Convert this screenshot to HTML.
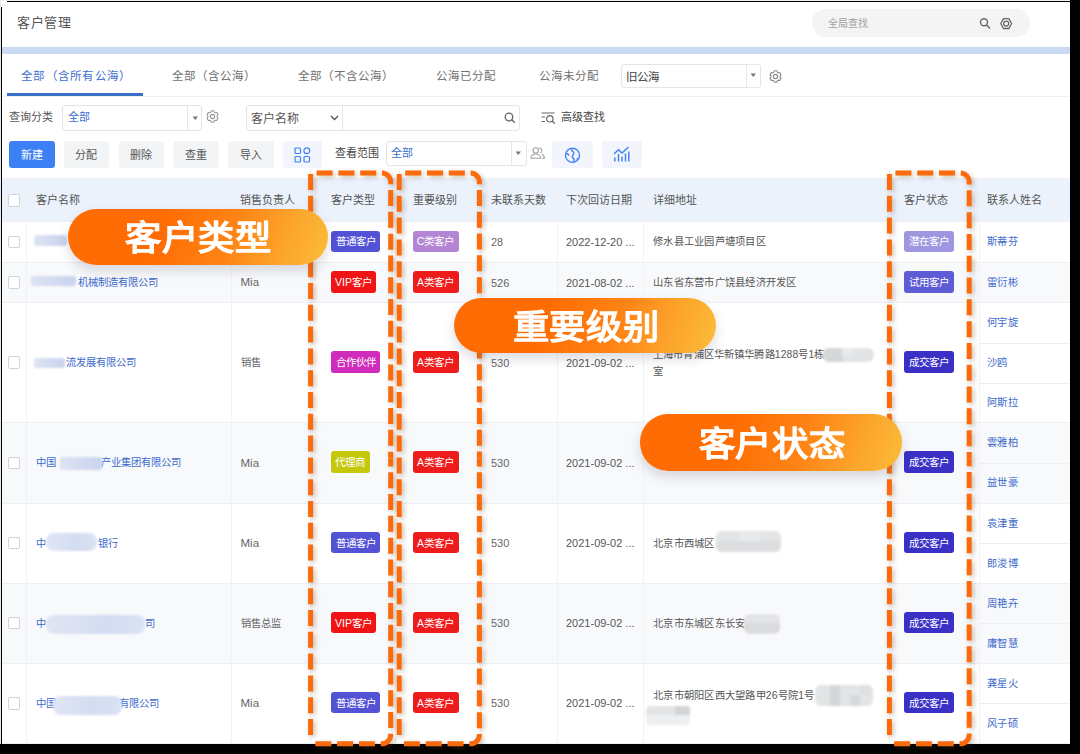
<!DOCTYPE html>
<html lang="zh-CN">
<head>
<meta charset="utf-8">
<style>
*{box-sizing:border-box;margin:0;padding:0}
html,body{width:1080px;height:754px;overflow:hidden;background:#fff}
body{position:relative;font-family:"Liberation Sans",sans-serif;color:#555;font-size:11px}
.a{position:absolute;white-space:nowrap;line-height:1}
.blk{position:absolute;background:#000}
.btn{position:absolute;top:141px;height:26.5px;background:#f2f3f5;border-radius:3px}
.sel{position:absolute;border:1px solid #e2e5ea;border-radius:3px;background:#fff}
.row{position:absolute;left:2px;width:1068px}
.ev{background:#f8f9fb}
.vd{position:absolute;width:1px;background:#f1f2f5}
.hl{position:absolute;left:2px;width:1068px;height:1px;background:#edeff3}
.cb{position:absolute;left:7.5px;width:12.5px;height:12.5px;border:1px solid #cfd3da;border-radius:2px;background:#fff}
.bd{position:absolute;height:21.5px;border-radius:3px;color:#fff;font-size:10.5px;line-height:21.5px;text-align:center}
.pill{position:absolute;border-radius:28px;background:linear-gradient(108deg,#ff6c04 0%,#ff6c02 35%,#fe8416 62%,#fca42c 82%,#fbbd3a 100%);box-shadow:0 6px 12px rgba(60,60,90,.18)}
</style>
</head>
<body>

<div class="pill" style="z-index:9;left:67.5px;top:209px;width:260.3px;height:56.0px"></div>
<div class="a" style="z-index:10;left:68.1px;width:260.3px;top:221.22px;text-align:center;font-size:34px;letter-spacing:0.3px;transform:scaleX(1.065);-webkit-text-stroke:1.5px #fff;color:#fff">客户类型</div>
<div class="pill" style="z-index:9;left:454.4px;top:297.8px;width:262.0px;height:55.5px"></div>
<div class="a" style="z-index:10;left:455.0px;width:262.0px;top:309.77px;text-align:center;font-size:34px;letter-spacing:0.3px;transform:scaleX(1.065);-webkit-text-stroke:1.5px #fff;color:#fff">重要级别</div>
<div class="pill" style="z-index:9;left:640px;top:414.4px;width:262.0px;height:56.4px"></div>
<div class="a" style="z-index:10;left:640.6px;width:262.0px;top:426.82px;text-align:center;font-size:34px;letter-spacing:0.3px;transform:scaleX(1.065);-webkit-text-stroke:1.5px #fff;color:#fff">客户状态</div>
<div class="a" style="left:0;top:0;width:1080px;height:1px;background:#f0f0f0"></div>
<div class="a" style="left:0;top:0;width:1px;height:754px;background:#e8eaea"></div>
<div class="a" style="left:17px;top:16.09px;font-size:13px;color:#555;letter-spacing:0.6px;">客户管理</div>
<div class="a" style="left:812px;top:9px;width:218px;height:28px;border-radius:14px;background:#f4f4f4"></div>
<div class="a" style="left:828px;top:19.30px;font-size:10px;color:#a0a0a0;">全局查找</div>
<svg class="a" style="left:979px;top:17px" width="13" height="13" viewBox="0 0 13 13"><circle cx="5" cy="5.3" r="3.5" fill="none" stroke="#666" stroke-width="1.4"/><path d="M7.6 8l3.3 3.4" stroke="#666" stroke-width="1.5"/></svg>
<svg class="a" style="left:0;top:0" width="1080" height="60"><path d="M1000.8000000000001 23.55L1003.5 18.6H1008.9000000000001L1011.6 23.55L1008.9000000000001 28.5H1003.5Z" fill="none" stroke="#666" stroke-width="1.3" stroke-linejoin="round"/><circle cx="1006.2" cy="23.55" r="2.5" fill="none" stroke="#666" stroke-width="1.3"/></svg>
<div class="a" style="left:2px;top:47px;width:1068px;height:6.5px;background:#cadaf2"></div>
<div class="a" style="left:21px;top:70.59px;font-size:11.5px;color:#3d6fd0;letter-spacing:1.25px;">全部（含所有公海）</div>
<div class="a" style="left:171.5px;top:70.59px;font-size:11.5px;color:#707070;letter-spacing:1.1px;">全部（含公海）</div>
<div class="a" style="left:298px;top:70.59px;font-size:11.5px;color:#707070;letter-spacing:1.05px;">全部（不含公海）</div>
<div class="a" style="left:436.3px;top:70.59px;font-size:11.5px;color:#707070;letter-spacing:1.05px;">公海已分配</div>
<div class="a" style="left:539.3px;top:70.59px;font-size:11.5px;color:#707070;letter-spacing:1.0px;">公海未分配</div>
<div class="sel" style="left:620.5px;top:63.5px;width:140px;height:24.5px"></div>
<div class="a" style="left:745.5px;top:64.5px;width:1px;height:22.5px;background:#e4e6ea"></div>
<div class="a" style="left:625.5px;top:72.30px;font-size:11.5px;color:#444;">旧公海</div>
<svg class="a" style="left:750px;top:73px" width="7" height="5"><path d="M0.5 0.5h5.5L3.25 4z" fill="#777"/></svg>
<svg class="a" style="left:769px;top:70px" width="13" height="13" viewBox="0 0 13 13"><path d="M4.61 2.26 L5.35 0.82 L7.65 0.82 L8.39 2.26 L9.22 2.74 L10.85 2.66 L12.00 4.66 L11.12 6.02 L11.12 6.98 L12.00 8.34 L10.85 10.34 L9.22 10.26 L8.39 10.74 L7.65 12.18 L5.35 12.18 L4.61 10.74 L3.78 10.26 L2.15 10.34 L1.00 8.34 L1.88 6.98 L1.88 6.02 L1.00 4.66 L2.15 2.66 L3.78 2.74Z" fill="none" stroke="#888" stroke-width="1.1" stroke-linejoin="round"/><circle cx="6.5" cy="6.5" r="2.09" fill="none" stroke="#888" stroke-width="1.1"/></svg>
<div class="a" style="left:7px;top:93px;width:136px;height:3px;background:#3a6fc8"></div>
<div class="a" style="left:2px;top:96px;width:1068px;height:1px;background:#eef0f3"></div>
<div class="a" style="left:9px;top:112.33px;font-size:11px;color:#555;">查询分类</div>
<div class="sel" style="left:61.5px;top:105px;width:140px;height:25.5px"></div>
<div class="a" style="left:186.5px;top:106px;width:1px;height:23.5px;background:#e4e6ea"></div>
<div class="a" style="left:68px;top:112.33px;font-size:11px;color:#3d6fd0;">全部</div>
<svg class="a" style="left:191.5px;top:115.5px" width="7" height="5"><path d="M0.5 0.5h5.5L3.25 4z" fill="#777"/></svg>
<svg class="a" style="left:206px;top:110px" width="13" height="13" viewBox="0 0 13 13"><path d="M4.61 2.26 L5.35 0.82 L7.65 0.82 L8.39 2.26 L9.22 2.74 L10.85 2.66 L12.00 4.66 L11.12 6.02 L11.12 6.98 L12.00 8.34 L10.85 10.34 L9.22 10.26 L8.39 10.74 L7.65 12.18 L5.35 12.18 L4.61 10.74 L3.78 10.26 L2.15 10.34 L1.00 8.34 L1.88 6.98 L1.88 6.02 L1.00 4.66 L2.15 2.66 L3.78 2.74Z" fill="none" stroke="#999" stroke-width="1.1" stroke-linejoin="round"/><circle cx="6.5" cy="6.5" r="2.09" fill="none" stroke="#999" stroke-width="1.1"/></svg>
<div class="sel" style="left:246px;top:105px;width:274px;height:25.5px"></div>
<div class="a" style="left:342px;top:106px;width:1px;height:23.5px;background:#e4e6ea"></div>
<div class="a" style="left:251px;top:113.26px;font-size:12px;color:#555;">客户名称</div>
<svg class="a" style="left:329.5px;top:115px" width="9" height="6"><path d="M1 1l3.5 3.5L8 1" fill="none" stroke="#555" stroke-width="1.4"/></svg>
<svg class="a" style="left:504px;top:112px" width="12" height="12" viewBox="0 0 12 12"><circle cx="5" cy="5" r="3.8" fill="none" stroke="#666" stroke-width="1.3"/><path d="M7.8 7.8l3 3" stroke="#666" stroke-width="1.4"/></svg>
<svg class="a" style="left:541px;top:111.5px" width="15" height="12" viewBox="0 0 15 12"><path d="M0.5 1h13M0.5 5h3.5M0.5 9.5h3.5" stroke="#666" stroke-width="1.2"/><circle cx="8.8" cy="6.8" r="3.2" fill="none" stroke="#666" stroke-width="1.2"/><path d="M11.1 9.1l2.6 2.4" stroke="#666" stroke-width="1.3"/></svg>
<div class="a" style="left:561px;top:112.33px;font-size:11px;color:#444;">高级查找</div>
<div class="btn" style="left:9px;width:45.5px;background:#3d7ff5"></div>
<div class="a" style="left:20.75px;top:150.13px;font-size:11px;color:#fff;">新建</div>
<div class="btn" style="left:63.5px;width:45.5px;background:#f3f4f6"></div>
<div class="a" style="left:75.25px;top:150.13px;font-size:11px;color:#555;">分配</div>
<div class="btn" style="left:118.5px;width:45.5px;background:#f3f4f6"></div>
<div class="a" style="left:130.25px;top:150.13px;font-size:11px;color:#555;">删除</div>
<div class="btn" style="left:173px;width:45.5px;background:#f3f4f6"></div>
<div class="a" style="left:184.75px;top:150.13px;font-size:11px;color:#555;">查重</div>
<div class="btn" style="left:228px;width:45.5px;background:#f3f4f6"></div>
<div class="a" style="left:239.75px;top:150.13px;font-size:11px;color:#555;">导入</div>
<div class="btn" style="left:282.5px;width:39.5px;background:#f2f5fb"></div>
<svg class="a" style="left:294px;top:146.5px" width="17" height="16" viewBox="0 0 17 16"><g fill="none" stroke="#3d7ff5" stroke-width="1.2"><rect x="1" y="1" width="5.5" height="5.5" rx="1"/><circle cx="12.8" cy="3.8" r="2.9"/><rect x="1" y="9.5" width="5.5" height="5.5" rx="1"/><rect x="10" y="9.5" width="5.5" height="5.5" rx="1"/></g></svg>
<div class="a" style="left:334.5px;top:148.33px;font-size:11px;color:#444;">查看范围</div>
<div class="sel" style="left:385.5px;top:141px;width:141px;height:25px"></div>
<div class="a" style="left:510.5px;top:142px;width:1px;height:23px;background:#e4e6ea"></div>
<div class="a" style="left:391px;top:148.33px;font-size:11px;color:#3d6fd0;">全部</div>
<svg class="a" style="left:515px;top:151px" width="7" height="5"><path d="M0.5 0.5h5.5L3.25 4z" fill="#777"/></svg>
<svg class="a" style="left:529.5px;top:147px" width="15" height="12" viewBox="0 0 15 12"><g fill="none" stroke="#a0a0a0" stroke-width="1.1"><circle cx="5.8" cy="3.5" r="2.7"/><path d="M1 11.3c0-2.6 2-4.3 4.8-4.3s4.8 1.7 4.8 4.3z"/><path d="M9.2 1a2.6 2.6 0 0 1 1.3 4.9M11.8 7.3c1.5.6 2.6 2 2.6 4h-2.5"/></g></svg>
<div class="btn" style="left:552px;width:40.5px;background:#f2f5fb"></div>
<svg class="a" style="left:564px;top:146.5px" width="17" height="17" viewBox="0 0 17 17"><g fill="none" stroke="#4a86f2" stroke-width="1.4"><circle cx="8.5" cy="8.3" r="7"/><path d="M8.3 1.5c-1 1.2-.6 2.4.6 3.2s1.3 2 .3 3-1.4 2.2-.2 3.2 1.6 2.4 1 4.4"/><path d="M2.2 6.5c1.3.2 2.5.9 2.6 2.2M12.5 12c.8-.4 1.9-.3 2.6.2"/></g></svg>
<div class="btn" style="left:601.5px;width:40px;background:#f2f5fb"></div>
<svg class="a" style="left:613px;top:146px" width="17" height="16" viewBox="0 0 17 16"><g fill="none" stroke="#3d7ff5" stroke-width="1.4"><path d="M1 8l4.5-4.2 3.5 3.2 6.5-6"/><path d="M1.8 15.5V11.5M5.5 15.5V8M9 15.5V10.5M12.5 15.5V7.5M15.8 15.5V5.5"/></g></svg>
<div class="a" style="top:178px;left:2px;width:1068px;height:43.5px;background:#ebf2fc"></div>
<div class="row" style="top:221.5px;height:40.80000000000001px"></div>
<div class="row ev" style="top:262.3px;height:40.19999999999999px"></div>
<div class="row" style="top:302.5px;height:120.0px"></div>
<div class="row ev" style="top:422.5px;height:80.5px"></div>
<div class="row" style="top:503px;height:80px"></div>
<div class="row ev" style="top:583px;height:80px"></div>
<div class="row" style="top:663px;height:80.5px"></div>
<div class="hl" style="top:261.8px"></div>
<div class="hl" style="top:302.0px"></div>
<div class="hl" style="top:422.0px"></div>
<div class="hl" style="top:502.5px"></div>
<div class="hl" style="top:582.5px"></div>
<div class="hl" style="top:662.5px"></div>
<div class="hl" style="top:743.0px"></div>
<div class="vd" style="left:26px;top:178.5px;height:565px"></div>
<div class="vd" style="left:231px;top:178.5px;height:565px"></div>
<div class="vd" style="left:310px;top:178.5px;height:565px"></div>
<div class="vd" style="left:395px;top:178.5px;height:565px"></div>
<div class="vd" style="left:480px;top:178.5px;height:565px"></div>
<div class="vd" style="left:557px;top:178.5px;height:565px"></div>
<div class="vd" style="left:643px;top:178.5px;height:565px"></div>
<div class="vd" style="left:889px;top:178.5px;height:565px"></div>
<div class="vd" style="left:979px;top:178.5px;height:565px"></div>
<div class="a" style="left:35.5px;top:195.13px;font-size:11px;color:#555;">客户名称</div>
<div class="a" style="left:240px;top:195.13px;font-size:11px;color:#555;">销售负责人</div>
<div class="a" style="left:330.5px;top:195.13px;font-size:11px;color:#555;">客户类型</div>
<div class="a" style="left:413px;top:195.13px;font-size:11px;color:#555;">重要级别</div>
<div class="a" style="left:491px;top:195.13px;font-size:11px;color:#555;">未联系天数</div>
<div class="a" style="left:566px;top:195.13px;font-size:11px;color:#555;">下次回访日期</div>
<div class="a" style="left:653px;top:195.13px;font-size:11px;color:#555;">详细地址</div>
<div class="a" style="left:904px;top:195.13px;font-size:11px;color:#555;">客户状态</div>
<div class="a" style="left:987px;top:195.13px;font-size:11px;color:#555;">联系人姓名</div>
<div class="cb" style="top:194.25px"></div>
<div class="cb" style="top:235.65px"></div>
<div class="cb" style="top:276.15px"></div>
<div class="cb" style="top:356.25px"></div>
<div class="cb" style="top:456.5px"></div>
<div class="cb" style="top:536.75px"></div>
<div class="cb" style="top:616.75px"></div>
<div class="cb" style="top:697.0px"></div>
<div class="bd" style="left:331px;top:230.55px;width:49px;background:#5452d4"></div>
<div class="a" style="left:331px;top:236.40px;width:49px;text-align:center;font-size:10.5px;color:#fff">普通客户</div>
<div class="bd" style="left:412.5px;top:230.55px;width:46px;background:#b385d2"></div>
<div class="a" style="left:412.5px;top:236.40px;width:46px;text-align:center;font-size:10.5px;color:#fff">C类客户</div>
<div class="a" style="left:491px;top:237.13px;font-size:11px;color:#666;">28</div>
<div class="a" style="left:566px;top:237.13px;font-size:11px;color:#555;">2022-12-20 ...</div>
<div class="a" style="left:653px;top:237.46px;font-size:10.3px;color:#555;letter-spacing:0.25px;">修水县工业园芦塘项目区</div>
<div class="bd" style="left:904px;top:230.55px;width:50px;background:#9f96e2"></div>
<div class="a" style="left:904px;top:236.40px;width:50px;text-align:center;font-size:10.5px;color:#fff">潜在客户</div>
<div class="a" style="left:987px;top:237.46px;font-size:10.3px;color:#3d6acb;letter-spacing:0.3px;">斯蒂芬</div>
<div class="a" style="left:34px;top:234.7px;width:33.3px;height:11.8px;border-radius:3px;background:linear-gradient(90deg,#dde3f3,#c8d3ee);filter:blur(1px)"></div>
<div class="a" style="left:77.5px;top:277.96px;font-size:10.3px;color:#3d6acb;">机械制造有限公司</div>
<div class="a" style="left:240.5px;top:277.39px;font-size:11.5px;color:#666;">Mia</div>
<div class="bd" style="left:331px;top:271.04999999999995px;width:45px;background:#f01414"></div>
<div class="a" style="left:331px;top:276.90px;width:45px;text-align:center;font-size:10.5px;color:#fff">VIP客户</div>
<div class="bd" style="left:412.5px;top:271.04999999999995px;width:46px;background:#ee1b1b"></div>
<div class="a" style="left:412.5px;top:276.90px;width:46px;text-align:center;font-size:10.5px;color:#fff">A类客户</div>
<div class="a" style="left:491px;top:277.63px;font-size:11px;color:#666;">526</div>
<div class="a" style="left:566px;top:277.63px;font-size:11px;color:#555;">2021-08-02 ...</div>
<div class="a" style="left:653px;top:277.96px;font-size:10.3px;color:#555;letter-spacing:0.25px;">山东省东营市广饶县经济开发区</div>
<div class="bd" style="left:904px;top:271.04999999999995px;width:50px;background:#5e5bd6"></div>
<div class="a" style="left:904px;top:276.90px;width:50px;text-align:center;font-size:10.5px;color:#fff">试用客户</div>
<div class="a" style="left:987px;top:277.96px;font-size:10.3px;color:#3d6acb;letter-spacing:0.3px;">雷衍彬</div>
<div class="a" style="left:30.5px;top:276px;width:45.0px;height:9.5px;border-radius:3px;background:linear-gradient(90deg,#dde3f3,#c8d3ee);filter:blur(1px)"></div>
<div class="a" style="left:66px;top:358.06px;font-size:10.3px;color:#3d6acb;">流发展有限公司</div>
<div class="a" style="left:240.5px;top:358.06px;font-size:10.3px;color:#666;">销售</div>
<div class="bd" style="left:331px;top:351.15px;width:49px;background:#cf2cbc"></div>
<div class="a" style="left:331px;top:357.00px;width:49px;text-align:center;font-size:10.5px;color:#fff">合作伙伴</div>
<div class="bd" style="left:412.5px;top:351.15px;width:46px;background:#ee1b1b"></div>
<div class="a" style="left:412.5px;top:357.00px;width:46px;text-align:center;font-size:10.5px;color:#fff">A类客户</div>
<div class="a" style="left:491px;top:357.73px;font-size:11px;color:#666;">530</div>
<div class="a" style="left:566px;top:357.73px;font-size:11px;color:#555;">2021-09-02 ...</div>
<div class="a" style="left:653px;top:350.06px;font-size:10.3px;color:#555;letter-spacing:0.15px;">上海市青浦区华新镇华腾路1288号1栋</div>
<div class="a" style="left:653px;top:367.06px;font-size:10.3px;color:#555;">室</div>
<div class="bd" style="left:904px;top:351.15px;width:50px;background:#3a30c6"></div>
<div class="a" style="left:904px;top:357.00px;width:50px;text-align:center;font-size:10.5px;color:#fff">成交客户</div>
<div class="a" style="left:987px;top:318.06px;font-size:10.3px;color:#3d6acb;letter-spacing:0.3px;">何宇旋</div>
<div class="a" style="left:987px;top:358.06px;font-size:10.3px;color:#3d6acb;letter-spacing:0.3px;">沙鸥</div>
<div class="a" style="left:987px;top:398.06px;font-size:10.3px;color:#3d6acb;letter-spacing:0.3px;">阿斯拉</div>
<div class="a" style="left:979px;top:342.5px;width:91px;height:1px;background:#eceef2"></div>
<div class="a" style="left:979px;top:382.5px;width:91px;height:1px;background:#eceef2"></div>
<div class="a" style="left:34px;top:357.8px;width:31.3px;height:10.2px;border-radius:3px;background:linear-gradient(90deg,#dde3f3,#c8d3ee);filter:blur(1px)"></div>
<div class="a" style="left:35.5px;top:458.31px;font-size:10.3px;color:#3d6acb;">中国</div>
<div class="a" style="left:101px;top:458.31px;font-size:10.3px;color:#3d6acb;">产业集团有限公司</div>
<div class="a" style="left:240.5px;top:457.75px;font-size:11.5px;color:#666;">Mia</div>
<div class="bd" style="left:331px;top:451.4px;width:38.5px;background:#c4c70c"></div>
<div class="a" style="left:331px;top:457.25px;width:38.5px;text-align:center;font-size:10.5px;color:#fff">代理商</div>
<div class="bd" style="left:412.5px;top:451.4px;width:46px;background:#ee1b1b"></div>
<div class="a" style="left:412.5px;top:457.25px;width:46px;text-align:center;font-size:10.5px;color:#fff">A类客户</div>
<div class="a" style="left:491px;top:457.98px;font-size:11px;color:#666;">530</div>
<div class="a" style="left:566px;top:457.98px;font-size:11px;color:#555;">2021-09-02 ...</div>
<div class="bd" style="left:904px;top:451.4px;width:50px;background:#3a30c6"></div>
<div class="a" style="left:904px;top:457.25px;width:50px;text-align:center;font-size:10.5px;color:#fff">成交客户</div>
<div class="a" style="left:987px;top:438.06px;font-size:10.3px;color:#3d6acb;letter-spacing:0.3px;">雲雅柏</div>
<div class="a" style="left:987px;top:478.06px;font-size:10.3px;color:#3d6acb;letter-spacing:0.3px;">益世豪</div>
<div class="a" style="left:979px;top:462.5px;width:91px;height:1px;background:#eceef2"></div>
<div class="a" style="left:60.4px;top:456.5px;width:41.5px;height:13.1px;border-radius:3px;background:linear-gradient(90deg,#dde3f3,#c8d3ee);filter:blur(1px)"></div>
<div class="a" style="left:35.5px;top:538.56px;font-size:10.3px;color:#3d6acb;">中</div>
<div class="a" style="left:97.5px;top:538.56px;font-size:10.3px;color:#3d6acb;">银行</div>
<div class="a" style="left:240.5px;top:538.00px;font-size:11.5px;color:#666;">Mia</div>
<div class="bd" style="left:331px;top:531.65px;width:49px;background:#5452d4"></div>
<div class="a" style="left:331px;top:537.50px;width:49px;text-align:center;font-size:10.5px;color:#fff">普通客户</div>
<div class="bd" style="left:412.5px;top:531.65px;width:46px;background:#ee1b1b"></div>
<div class="a" style="left:412.5px;top:537.50px;width:46px;text-align:center;font-size:10.5px;color:#fff">A类客户</div>
<div class="a" style="left:491px;top:538.23px;font-size:11px;color:#666;">530</div>
<div class="a" style="left:566px;top:538.23px;font-size:11px;color:#555;">2021-09-02 ...</div>
<div class="a" style="left:653px;top:538.56px;font-size:10.3px;color:#555;letter-spacing:0.25px;">北京市西城区</div>
<div class="bd" style="left:904px;top:531.65px;width:50px;background:#3a30c6"></div>
<div class="a" style="left:904px;top:537.50px;width:50px;text-align:center;font-size:10.5px;color:#fff">成交客户</div>
<div class="a" style="left:987px;top:518.56px;font-size:10.3px;color:#3d6acb;letter-spacing:0.3px;">袁津重</div>
<div class="a" style="left:987px;top:558.56px;font-size:10.3px;color:#3d6acb;letter-spacing:0.3px;">郎浚博</div>
<div class="a" style="left:979px;top:543px;width:91px;height:1px;background:#eceef2"></div>
<div class="a" style="left:45.6px;top:533.4px;width:51.8px;height:17.8px;border-radius:8px;background:linear-gradient(90deg,#e0e6f5,#d3dcf1 60%,#dae2f4);filter:blur(1px)"></div>
<div class="a" style="left:35.5px;top:618.56px;font-size:10.3px;color:#3d6acb;">中</div>
<div class="a" style="left:145px;top:618.56px;font-size:10.3px;color:#3d6acb;">司</div>
<div class="a" style="left:240.5px;top:618.56px;font-size:10.3px;color:#666;">销售总监</div>
<div class="bd" style="left:331px;top:611.65px;width:45px;background:#f01414"></div>
<div class="a" style="left:331px;top:617.50px;width:45px;text-align:center;font-size:10.5px;color:#fff">VIP客户</div>
<div class="bd" style="left:412.5px;top:611.65px;width:46px;background:#ee1b1b"></div>
<div class="a" style="left:412.5px;top:617.50px;width:46px;text-align:center;font-size:10.5px;color:#fff">A类客户</div>
<div class="a" style="left:491px;top:618.23px;font-size:11px;color:#666;">530</div>
<div class="a" style="left:566px;top:618.23px;font-size:11px;color:#555;">2021-09-02 ...</div>
<div class="a" style="left:653px;top:618.56px;font-size:10.3px;color:#555;letter-spacing:0.25px;">北京市东城区东长安</div>
<div class="bd" style="left:904px;top:611.65px;width:50px;background:#3a30c6"></div>
<div class="a" style="left:904px;top:617.50px;width:50px;text-align:center;font-size:10.5px;color:#fff">成交客户</div>
<div class="a" style="left:987px;top:598.56px;font-size:10.3px;color:#3d6acb;letter-spacing:0.3px;">周艳卉</div>
<div class="a" style="left:987px;top:638.56px;font-size:10.3px;color:#3d6acb;letter-spacing:0.3px;">庸智慧</div>
<div class="a" style="left:979px;top:623px;width:91px;height:1px;background:#eceef2"></div>
<div class="a" style="left:45.6px;top:614.6px;width:99.9px;height:19.3px;border-radius:8px;background:linear-gradient(90deg,#e0e6f5,#d3dcf1 60%,#dae2f4);filter:blur(1px)"></div>
<div class="a" style="left:35.5px;top:698.81px;font-size:10.3px;color:#3d6acb;">中国</div>
<div class="a" style="left:119px;top:698.81px;font-size:10.3px;color:#3d6acb;">有限公司</div>
<div class="a" style="left:240.5px;top:698.25px;font-size:11.5px;color:#666;">Mia</div>
<div class="bd" style="left:331px;top:691.9px;width:49px;background:#5452d4"></div>
<div class="a" style="left:331px;top:697.75px;width:49px;text-align:center;font-size:10.5px;color:#fff">普通客户</div>
<div class="bd" style="left:412.5px;top:691.9px;width:46px;background:#ee1b1b"></div>
<div class="a" style="left:412.5px;top:697.75px;width:46px;text-align:center;font-size:10.5px;color:#fff">A类客户</div>
<div class="a" style="left:491px;top:698.48px;font-size:11px;color:#666;">530</div>
<div class="a" style="left:566px;top:698.48px;font-size:11px;color:#555;">2021-09-02 ...</div>
<div class="a" style="left:653px;top:690.81px;font-size:10.3px;color:#555;letter-spacing:0.25px;">北京市朝阳区西大望路甲26号院1号</div>
<div class="bd" style="left:904px;top:691.9px;width:50px;background:#3a30c6"></div>
<div class="a" style="left:904px;top:697.75px;width:50px;text-align:center;font-size:10.5px;color:#fff">成交客户</div>
<div class="a" style="left:987px;top:678.56px;font-size:10.3px;color:#3d6acb;letter-spacing:0.3px;">龚星火</div>
<div class="a" style="left:987px;top:718.56px;font-size:10.3px;color:#3d6acb;letter-spacing:0.3px;">风子硕</div>
<div class="a" style="left:979px;top:703px;width:91px;height:1px;background:#eceef2"></div>
<div class="a" style="left:53.4px;top:696px;width:68.3px;height:19.0px;border-radius:8px;background:linear-gradient(90deg,#e0e6f5,#d3dcf1 60%,#dae2f4);filter:blur(1px)"></div>
<div class="a" style="left:822.8px;top:347.8px;width:51.2px;height:14.4px;border-radius:6px;background:#e3e4e6;filter:blur(1px);overflow:hidden"><div style="position:absolute;left:0.0px;top:0.0px;width:20px;height:14.4px;background:#d6d7d9"></div><div style="position:absolute;left:19.2px;top:0.0px;width:12px;height:7px;background:#e9eaeb"></div></div>
<div class="a" style="left:715.7px;top:531.1px;width:64.9px;height:20.9px;border-radius:6px;background:#e3e4e6;filter:blur(1px);overflow:hidden"><div style="position:absolute;left:0.0px;top:9.9px;width:65px;height:11px;background:#dcdddf"></div><div style="position:absolute;left:24.3px;top:0.0px;width:20px;height:10px;background:#e8e9ea"></div></div>
<div class="a" style="left:743.8px;top:613.7px;width:36.6px;height:19.9px;border-radius:6px;background:#e3e4e6;filter:blur(1px);overflow:hidden"><div style="position:absolute;left:0.0px;top:9.8px;width:37px;height:10px;background:#dadbdd"></div></div>
<div class="a" style="left:814.8px;top:685.4px;width:57.8px;height:20.9px;border-radius:6px;background:#e3e4e6;filter:blur(1px);overflow:hidden"><div style="position:absolute;left:15.2px;top:0.0px;width:10px;height:21px;background:#d5d6d8"></div><div style="position:absolute;left:35.2px;top:9.6px;width:10px;height:11px;background:#d8d9db"></div><div style="position:absolute;left:45.2px;top:0.0px;width:12px;height:10px;background:#dfe0e2"></div></div>
<div class="a" style="left:645.8px;top:706.3px;width:44.0px;height:18.5px;border-radius:4px;background:#e4e5e7;filter:blur(1px);overflow:hidden"><div style="position:absolute;left:29.2px;top:0.0px;width:15px;height:9px;background:#d3d4d6"></div><div style="position:absolute;left:0.0px;top:8.7px;width:44px;height:10px;background:#eeeff0"></div></div>
<div class="blk" style="left:7px;top:1px;width:1073px;height:1px"></div>
<div class="blk" style="left:1px;top:7px;width:1px;height:747px"></div>
<div class="blk" style="left:1070px;top:0;width:10px;height:754px"></div>
<div class="blk" style="left:0;top:744px;width:1080px;height:10px"></div>
<svg class="a" style="left:0;top:0;filter:drop-shadow(2px 2px 2.5px rgba(110,70,30,.35))" width="1080" height="754"><g fill="none" stroke="#fb6b0d" stroke-width="5">
<path d="M310.6 173H381.7A9 9 0 0 1 390.7 182V458.4" stroke-dasharray="16 5.8" stroke-dashoffset="15.8"/>
<path d="M310.6 743.8H381.7A9 9 0 0 0 390.7 734.8V458.4" stroke-dasharray="16 5.8" stroke-dashoffset="17.1"/>
<path d="M310.6 174V740.8" stroke-dasharray="16 5.8" stroke-dashoffset="0"/>
<path d="M399.2 173H470.4A9 9 0 0 1 479.4 182V458.4" stroke-dasharray="16 5.8" stroke-dashoffset="15.8"/>
<path d="M399.2 743.8H470.4A9 9 0 0 0 479.4 734.8V458.4" stroke-dasharray="16 5.8" stroke-dashoffset="17.1"/>
<path d="M399.2 174V740.8" stroke-dasharray="16 5.8" stroke-dashoffset="0"/>
<path d="M889.4 173H960.2A9 9 0 0 1 969.2 182V458.4" stroke-dasharray="16 5.8" stroke-dashoffset="15.8"/>
<path d="M889.4 743.8H960.2A9 9 0 0 0 969.2 734.8V458.4" stroke-dasharray="16 5.8" stroke-dashoffset="17.1"/>
<path d="M889.4 174V740.8" stroke-dasharray="16 5.8" stroke-dashoffset="0"/>
</g></svg>
</body>
</html>
